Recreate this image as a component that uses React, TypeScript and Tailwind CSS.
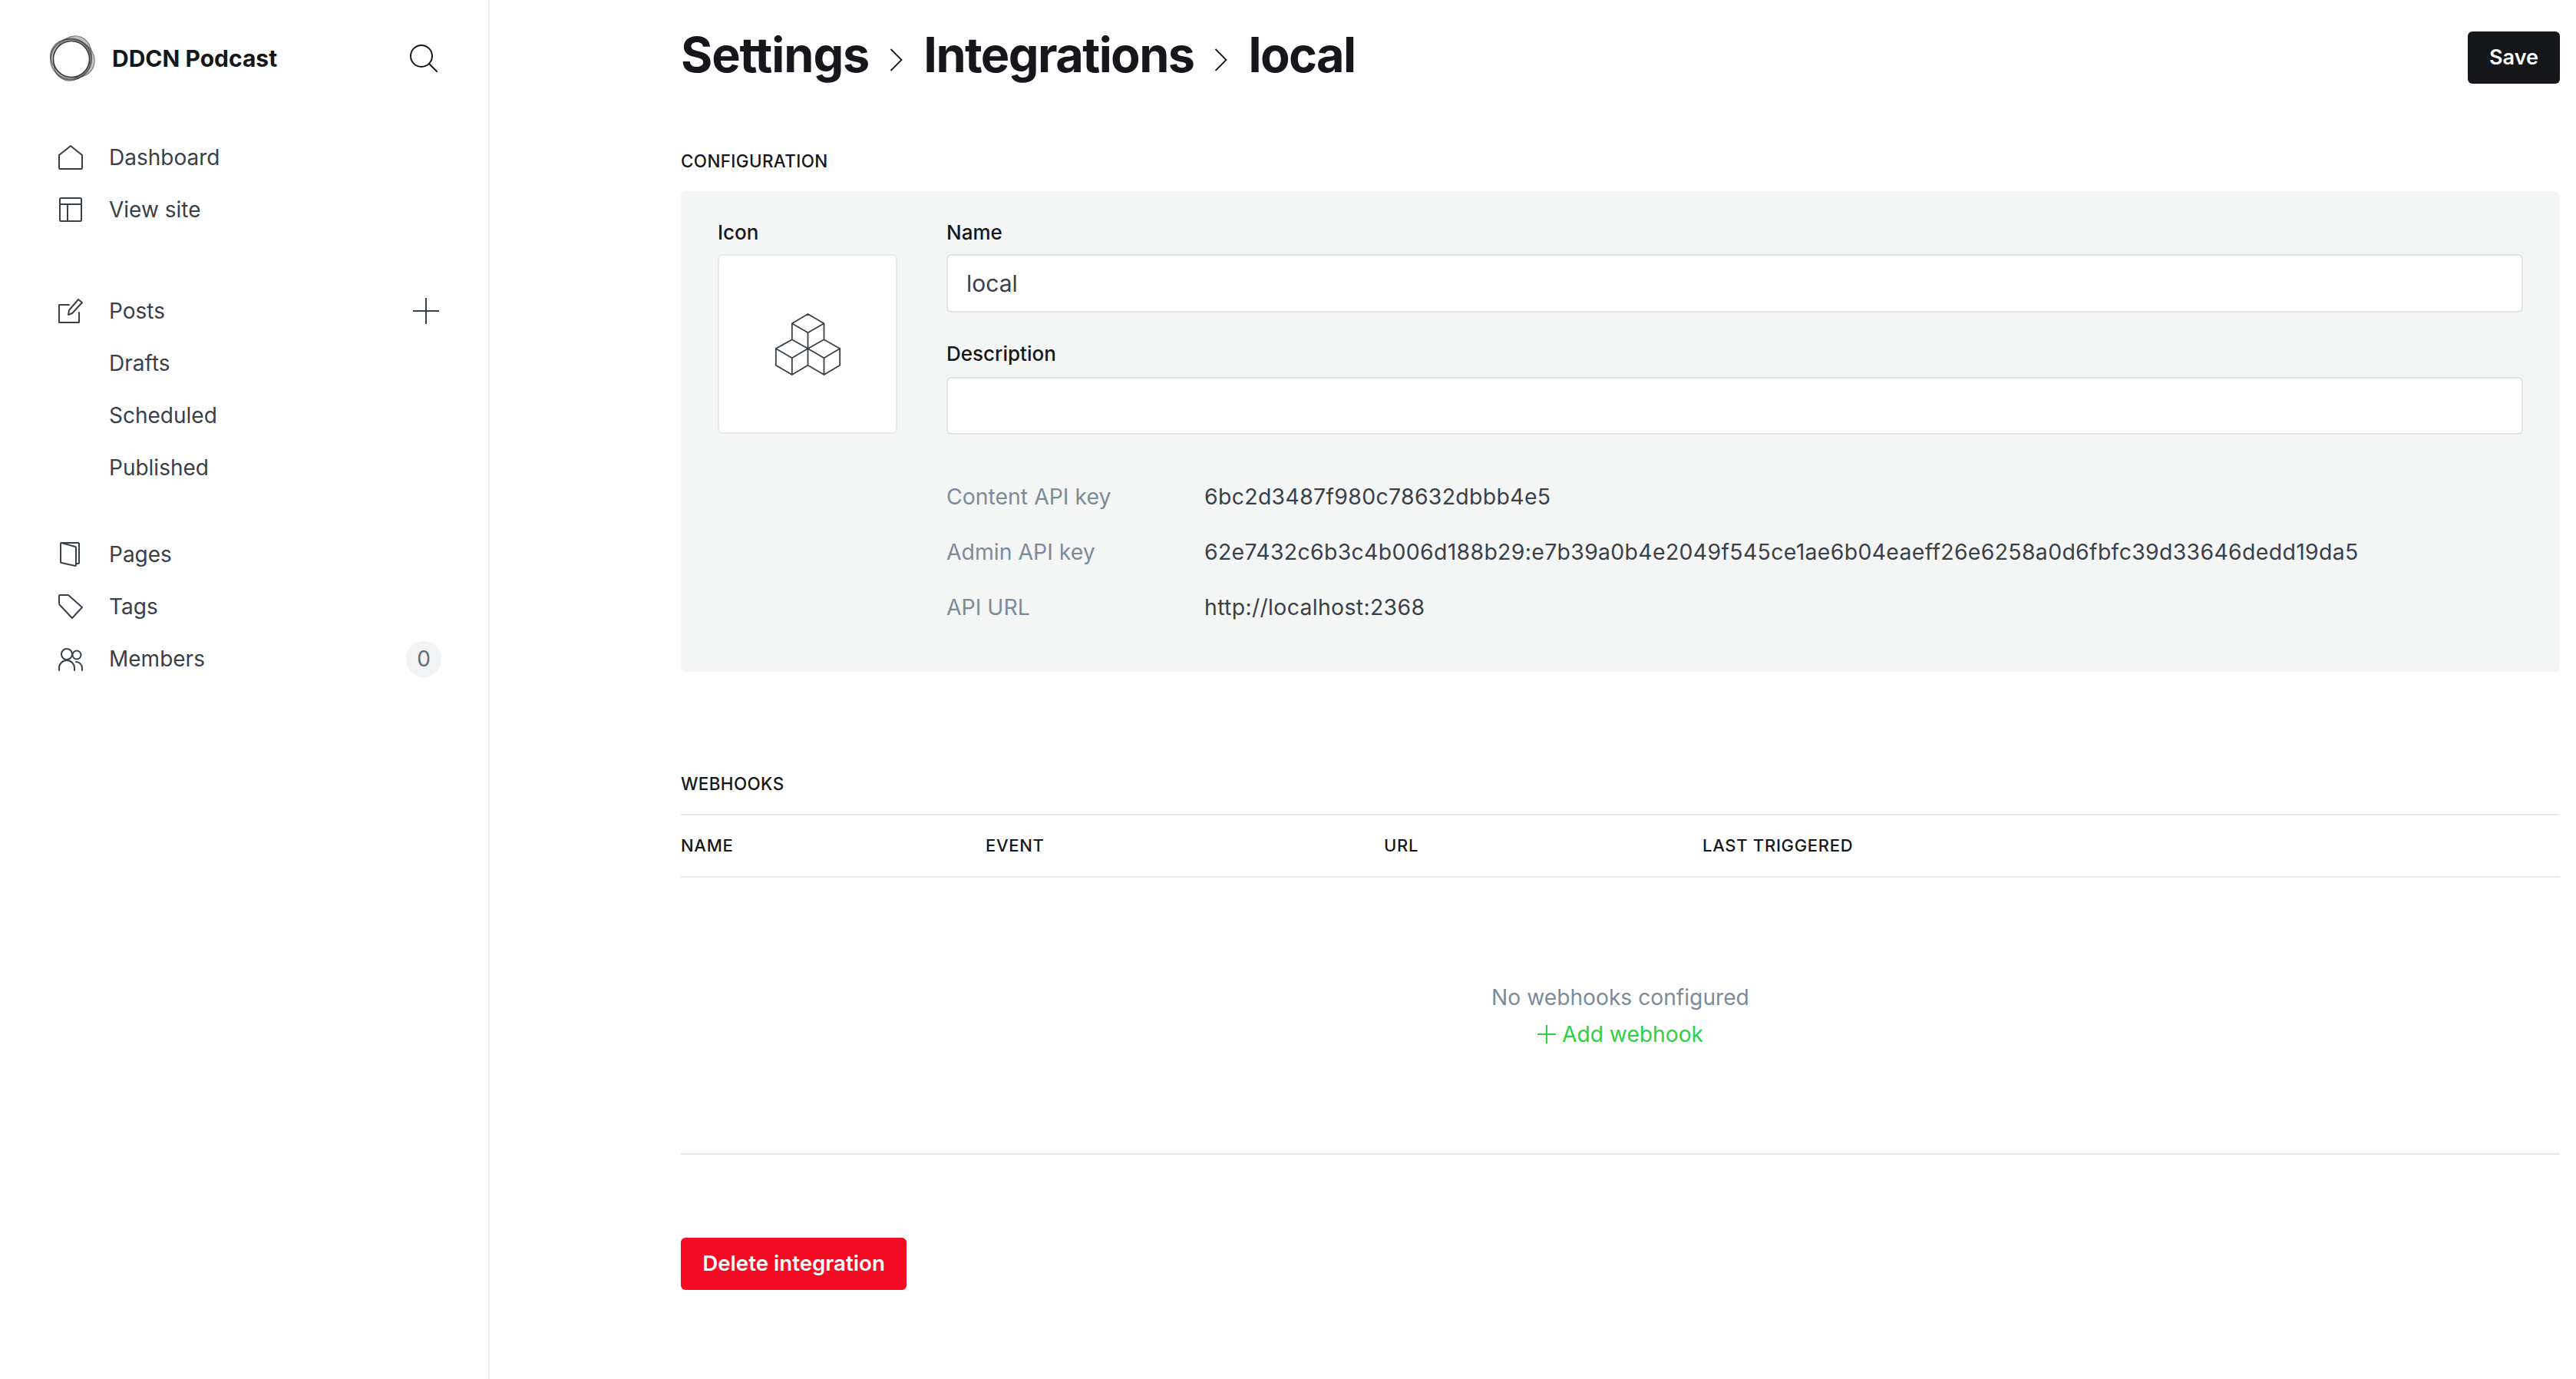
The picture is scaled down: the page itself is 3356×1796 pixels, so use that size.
const I = ({ children, size = 32, vb = 32, sw = 2, className = '' }: any) => (
  <svg width={size} height={size} viewBox={`0 0 ${vb} ${vb}`} fill="none" stroke="currentColor" strokeWidth={sw} strokeLinejoin="round" strokeLinecap="round" className={className}>{children}</svg>
);
const Row = ({ icon, label, right }: any) => (
  <div className="flex h-[68px] items-center">
    <div className="flex w-[66px] shrink-0 justify-start text-[#394047]">{icon}</div>
    <div className="flex-1 text-[28px] text-[#394047]">{label}</div>
    {right}
  </div>
);
const Chevron = () => (
  <svg width="17" height="30" viewBox="0 0 17 30" fill="none" stroke="#15171a" strokeWidth="1.8" className="mx-[27px] mt-[14px]"><path d="M1.5 1l14 14-14 14" /></svg>
);
export default function App() {
  return (
    <div className="flex min-h-[1796px] bg-white font-['Inter',sans-serif] text-[#15171a]">
      <aside className="w-[638px] shrink-0 border-r-2 border-[#e9e9e9] pl-[76px] pr-[66px]">
        <div className="-ml-[12px] mt-[46px] flex h-[60px] items-center">
          <svg width="60" height="60" viewBox="0 0 60 60" fill="none" className="overflow-visible">
            <ellipse cx="30.5" cy="30" rx="30" ry="24" transform="rotate(-68 30.5 30)" fill="#8a8a8a" fillOpacity="0.55" stroke="#222" strokeOpacity="0.55" strokeWidth="1" />
            <ellipse cx="30.5" cy="30" rx="29.5" ry="24.5" transform="rotate(22 30.5 30)" fill="#8a8a8a" fillOpacity="0.55" stroke="#222" strokeOpacity="0.55" strokeWidth="1" />
            <circle cx="28.5" cy="31" r="26.5" stroke="#222" strokeOpacity="0.55" strokeWidth="2" />
            <circle cx="29" cy="31" r="23.5" fill="#fff" stroke="#222" strokeOpacity="0.85" strokeWidth="1.6" />
          </svg>
          <div className="ml-[22px] flex-1 text-[30px] font-bold">DDCN Podcast</div>
          <svg width="36" height="36" viewBox="0 0 36 36" fill="none" stroke="#15171a" strokeWidth="2" strokeLinecap="round"><circle cx="15" cy="15" r="14" /><path d="M25 25l11 11" /></svg>
        </div>
        <nav className="mt-[65px]">
          <Row label="Dashboard" icon={<I><path d="M1 13L16 1l15 12v17a1 1 0 0 1-1 1H2a1 1 0 0 1-1-1z" /></I>} />
          <Row label="View site" icon={<I><rect x="2" y="1" width="28" height="30" rx="1.5" /><path d="M2 9h28M12 9v22" /></I>} />
        </nav>
        <nav className="mt-[64px]">
          <Row label="Posts" icon={<I><path d="M27 18v13H1V8h13" /><path d="M13 21l1-6L26 1l5 4-13 14z" /></I>} right={<svg width="36" height="36" viewBox="0 0 36 36" stroke="#394047" strokeWidth="2" className="-mr-[3px]"><path d="M18 1v34M1 18h34" /></svg>} />
          <Row label="Drafts" icon={null} />
          <Row label="Scheduled" icon={null} />
          <Row label="Published" icon={null} />
        </nav>
        <nav className="mt-[45px]">
          <Row label="Pages" icon={<I><path d="M4 1h22a1 1 0 0 1 1 1v25a1 1 0 0 1-1 1h-3" /><path d="M4 1l18 5a1 1 0 0 1 1 1v23a1 1 0 0 1-1 1L4 27a1 1 0 0 1-1-1V2a1 1 0 0 1 1-1z" /></I>} />
          <Row label="Tags" icon={<I><path d="M1 2a1 1 0 0 1 1-1h11l18 16-13 14L2 14a3 3 0 0 1-1-2z" /></I>} />
          <Row label="Members" icon={<I><circle cx="11" cy="10" r="7" /><path d="M1 31v-3a10 10 0 0 1 20 0v3" /><circle cx="24" cy="11" r="5.5" /><path d="M23 20a8 8 0 0 1 8 8v3" /></I>} right={<div className="-mr-[5px] flex h-[47px] w-[46px] items-center justify-center rounded-full bg-[#f1f3f4] text-[28px] text-[#626d79]">0</div>} />
        </nav>
      </aside>
      <main className="flex-1 pl-[249px] pr-[21px]">
        <div className="mt-[41px] flex h-[68px] items-center justify-between">
          <h1 className="mb-[8px] flex items-center text-[63px] font-bold tracking-[-1.6px]">
            <span className="tracking-[-1.1px]">Settings</span>
            <Chevron />
            Integrations
            <Chevron />
            local
          </h1>
          <button className="flex h-[68px] w-[120px] items-center justify-center rounded-[6px] bg-[#15171a] text-[27px] font-semibold text-white">Save</button>
        </div>
        <h2 className="mt-[88px] flex h-[26px] items-center text-[22.4px] font-medium tracking-[0.4px]">CONFIGURATION</h2>
        <section className="mt-[26px] h-[626px] rounded-[6px] bg-[#f4f5f5] pl-[48px] pr-[48px]">
          <div className="flex pt-[36px]">
            <div className="w-[234px] shrink-0">
              <div className="flex h-[34px] items-center text-[26px] font-medium">Icon</div>
              <div className="mt-[12px] flex h-[234px] w-[234px] items-center justify-center rounded-[6px] border-2 border-[#e6e9eb] bg-white">
                <svg width="87" height="81" viewBox="25 22 260 243" fill="none" stroke="#394047" strokeWidth="5.4" strokeLinejoin="round" strokeLinecap="round"><path d="M155 25L218 62V125L155 160L93 125V62ZM93 62L155 98L218 62M155 98V160M93 125L30 160V225L93 262L155 225L218 262L280 225V160L218 125M30 160L93 197L155 160L218 197L280 160M93 197V262M218 197V262M155 160V225" /></svg>
              </div>
            </div>
            <div className="ml-[64px] flex-1">
              <div className="flex h-[34px] items-center text-[26px] font-medium">Name</div>
              <div className="mt-[12px] flex h-[76px] items-center rounded-[6px] border-2 border-[#dfe2e5] bg-white pl-[24px] text-[30px] text-[#394047]">local</div>
              <div className="mt-[36px] flex h-[34px] items-center text-[26px] font-medium">Description</div>
              <div className="mt-[14px] h-[75px] rounded-[6px] border-2 border-[#dfe2e5] bg-white" />
            </div>
          </div>
          <div className="ml-[298px] mt-[45px] text-[28.4px]">
            {[['Content API key', '6bc2d3487f980c78632dbbb4e5'], ['Admin API key', '62e7432c6b3c4b006d188b29:e7b39a0b4e2049f545ce1ae6b04eaeff26e6258a0d6fbfc39d33646dedd19da5'], ['API URL', 'http://localhost:2368']].map(([a, b]) => (
              <div key={a} className="flex h-[72px] items-center">
                <div className="w-[336px] shrink-0 text-[#7c8b9a]">{a}</div>
                <div className="tracking-[0.34px] text-[#394047]">{b}</div>
              </div>
            ))}
          </div>
        </section>
        <h2 className="mt-[133px] flex h-[26px] items-center text-[22.4px] font-medium tracking-[0.4px]">WEBHOOKS</h2>
        <div className="mt-[26px] flex h-[83px] items-center border-y-2 border-[#e6e9eb] text-[22px] font-medium tracking-[0.7px]">
          <div className="w-[397px]">NAME</div>
          <div className="w-[519px]">EVENT</div>
          <div className="w-[415px]">URL</div>
          <div>LAST TRIGGERED</div>
        </div>
        <div className="flex h-[361px] flex-col items-center border-b-2 border-[#e6e9eb] pt-[132px] text-[28.2px]">
          <div className="flex h-[48px] items-center text-[#7c8b9a]">No webhooks configured</div>
          <div className="flex h-[48px] items-center text-[#30cf43]">
            <svg width="24" height="24" viewBox="0 0 24 24" stroke="#30cf43" strokeWidth="2" className="mr-[8px]"><path d="M12 0v24M0 12h24" /></svg>
            Add webhook
          </div>
        </div>
        <button className="mt-[108px] flex h-[68px] w-[294px] items-center justify-center rounded-[6px] bg-[#f50b23] text-[27.7px] font-semibold text-white">Delete integration</button>
      </main>
    </div>
  );
}
